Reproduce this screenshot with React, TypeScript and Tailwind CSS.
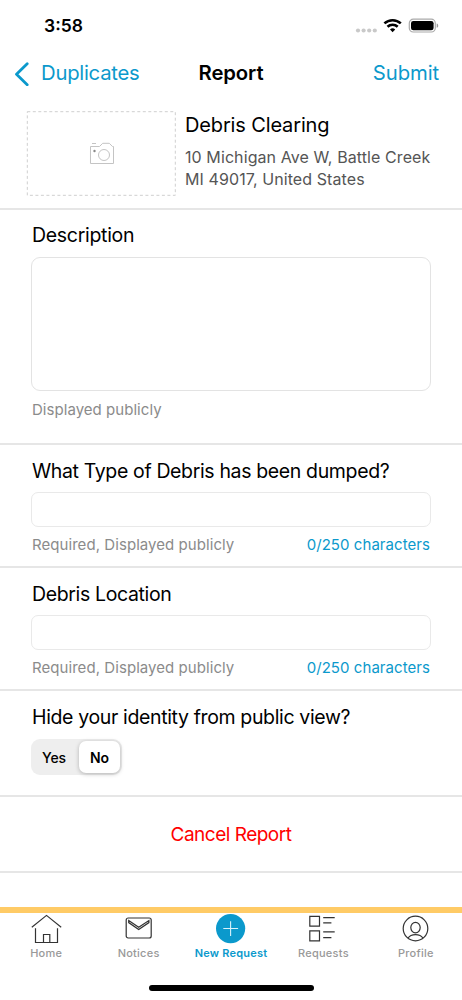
import { useState } from "react";
import type { ReactNode } from "react";

const tabs = [
  { label: "Home", icon: <HomeIcon /> },
  { label: "Notices", icon: <NoticesIcon /> },
  { label: "New Request", icon: <NewRequestIcon /> },
  { label: "Requests", icon: <RequestsIcon /> },
  { label: "Profile", icon: <ProfileIcon /> },
];

function HomeIcon() {
  return (
    <svg width="32" height="32" viewBox="0 0 32 32" fill="none" stroke="#333" strokeWidth="1.2">
      <path d="M1.8 15.2 16.5 3.4l14.7 11.8M5.5 16.3v14.2h22V16.3M13.5 30.5v-8h6.3v8" />
    </svg>
  );
}

function NoticesIcon() {
  return (
    <svg width="32" height="32" viewBox="0 0 32 32" fill="none" stroke="#333" strokeWidth="1.2">
      <rect x="3.2" y="6" width="25" height="20" rx="2" />
      <path d="M5.7 8.6 15.7 15.2l10.2-6.6v2l-10.2 6.9-10-6.9z" />
    </svg>
  );
}

function NewRequestIcon() {
  return (
    <svg width="32" height="32" viewBox="0 0 32 32">
      <circle cx="15.6" cy="16.6" r="14.6" fill="#0b99cc" />
      <path d="M8.3 16.5h14.8M15.6 9.2v14.8" stroke="#d8f2fb" strokeWidth="1.1" />
    </svg>
  );
}

function RequestsIcon() {
  return (
    <svg width="32" height="32" viewBox="0 0 32 32" fill="none" stroke="#333" strokeWidth="1.2">
      <path d="M2.8 4.3h9.7v9.8H2.8zM2.8 18.9h9.7v9.9H2.8zM16.2 5.6h11.5M16.2 10.9h8.2M16.2 19.9h11.5M16.2 25.6h8.2" />
    </svg>
  );
}

function ProfileIcon() {
  return (
    <svg width="32" height="32" viewBox="0 0 32 32" fill="none" stroke="#333" strokeWidth="1.2">
      <circle cx="15.5" cy="16.5" r="12.3" />
      <ellipse cx="15.5" cy="15.6" rx="4.7" ry="5.3" />
      <path d="M8 26.2c1.5-2.4 4.2-3.6 7.5-3.6s6 1.2 7.5 3.6" />
    </svg>
  );
}

function StatusIcons() {
  return (
    <svg width="84" height="16" viewBox="0 0 84 16">
      <g fill="#c9c9c9">
        <circle cx="3" cy="12.5" r="2.1" />
        <circle cx="8.6" cy="12.5" r="2.1" />
        <circle cx="14.2" cy="12.5" r="2.1" />
        <circle cx="19.8" cy="12.5" r="2.1" />
      </g>
      <g fill="none" stroke="#000" strokeWidth="2.6">
        <path d="M29.4 5.4a12.2 12.2 0 0 1 16.4 0" />
        <path d="M32.5 8.7a7.5 7.5 0 0 1 10.2 0" />
      </g>
      <path d="M37.6 14.2 35 11.5a3.8 3.8 0 0 1 5.2 0z" />
      <rect x="54.3" y="1.2" width="26" height="12.8" rx="4" fill="none" stroke="#aaa" strokeWidth="1.2" />
      <rect x="56" y="2.9" width="22.6" height="9.4" rx="2.4" />
      <path d="M81.7 5.4c2 .6 2 3.8 0 4.4z" fill="#999" />
    </svg>
  );
}

function Section({ className = "", children }: { className?: string; children: ReactNode }) {
  return <section className={`shrink-0 border-b-2 border-[#e6e6e6] px-[31px] ${className}`}>{children}</section>;
}

function TextField({ title }: { title: string }) {
  return (
    <Section className="h-[123px] pt-3">
      <label>
        <span className="block pl-px text-[19.5px] leading-[28px] tracking-[-0.36px] whitespace-nowrap">{title}</span>
        <input className="mt-[7px] block h-[35px] w-full rounded-[7px] border border-[#e9e9e9] bg-white px-3 outline-none" />
      </label>
      <div className="mt-2 flex justify-between px-px text-[15px] leading-[20px]">
        <span className="tracking-[0.06px] text-[#8b8b8b]">Required, Displayed publicly</span>
        <span className="tracking-[0.06px] text-[#0b99cc]">0/250 characters</span>
      </div>
    </Section>
  );
}

export default function App() {
  const [hidden, setHidden] = useState(false);

  return (
    <div className="flex h-[1000px] w-[462px] flex-col overflow-hidden bg-white font-['Inter',sans-serif] text-black">
      <div className="flex h-[50px] shrink-0 items-center justify-between pt-[2px] pr-[23px] pl-[44px]">
        <span className="text-[17.5px] font-semibold">3:58</span>
        <StatusIcons />
      </div>

      <header className="grid h-[50px] shrink-0 grid-cols-3 items-center pr-[23px] pb-[3px] pl-[14px] text-[20.3px]">
        <button className="flex items-center gap-[12px] text-[#0b99cc]" type="button">
          <svg width="15" height="24" viewBox="0 0 15 24" fill="none" stroke="currentColor" strokeWidth="2.8" strokeLinecap="round" strokeLinejoin="round">
            <path d="M13.2 1.7 2.5 12.3l10.7 10.4" />
          </svg>
          <span className="tracking-[-0.25px]">Duplicates</span>
        </button>
        <h1 className="pl-[9px] text-center font-semibold tracking-[-0.1px]">Report</h1>
        <button className="text-right tracking-[-0.1px] text-[#0b99cc]" type="button">Submit</button>
      </header>

      <section className="flex h-[110px] shrink-0 items-start border-b-2 border-[#e6e6e6] pt-[11px] pl-[26px]">
        <button type="button" aria-label="Add photo">
          <svg width="150" height="85" viewBox="0 0 150 85" fill="none">
            <rect x="1.3" y="0.7" width="148" height="83.6" stroke="#cfcfcf" strokeDasharray="3 2.5" />
            <path d="M64.5 35.5h9l3.2-3.2h6.6l3.2 3.2h1v17h-23zM66 32.5h4" stroke="#c4c4c4" />
            <circle cx="78" cy="44" r="5.5" stroke="#c4c4c4" />
            <circle cx="68.5" cy="40" r="1.2" fill="#888" />
          </svg>
        </button>
        <div className="pl-[9px]">
          <h2 className="text-[20px] leading-[28px] tracking-[-0.14px]">Debris Clearing</h2>
          <p className="mt-[7px] text-[16px] leading-[22px] tracking-[0.09px] whitespace-nowrap text-[#555]">
            10 Michigan Ave W, Battle Creek
            <br />
            MI 49017, United States
          </p>
        </div>
      </section>

      <Section className="h-[235px] pt-[11px]">
        <label>
          <span className="block pl-px text-[19.5px] leading-[28px] tracking-[-0.3px]">Description</span>
          <textarea className="mt-2 block h-[134px] w-full resize-none rounded-[9px] border border-[#e3e3e3] p-3 outline-none" />
        </label>
        <p className="mt-[9px] pl-px text-[15px] leading-[20px] tracking-[0.04px] text-[#8b8b8b]">Displayed publicly</p>
      </Section>

      <TextField title="What Type of Debris has been dumped?" />
      <TextField title="Debris Location" />

      <Section className="h-[106px] pt-3">
        <h3 className="pl-px text-[19.5px] leading-[28px] tracking-[-0.36px]">Hide your identity from public view?</h3>
        <div className="mt-2 flex h-[36px] w-[91px] rounded-[9px] bg-[#eee] p-[2px] text-[14px]">
          {["Yes", "No"].map((option) => {
            const selected = hidden === (option === "Yes");
            return (
              <button
                className={selected ? "w-[41px] rounded-[7px] bg-white font-semibold shadow-[0_1px_4px_rgba(0,0,0,0.25)]" : "flex-1 pr-1 font-medium tracking-[-0.1px]"}
                key={option}
                onClick={() => setHidden(option === "Yes")}
                type="button"
              >
                {option}
              </button>
            );
          })}
        </div>
      </Section>

      <Section className="flex h-[76px] items-center justify-center pt-[3px]">
        <button className="text-[19px] tracking-[-0.5px] text-[#f00]" type="button">Cancel Report</button>
      </Section>

      <nav className="mt-auto flex h-[93px] shrink-0 flex-col border-t-[6px] border-[#ffcb66] bg-white">
        <div className="flex">
          {tabs.map(({ label, icon }) => (
            <button className="flex flex-1 flex-col items-center" key={label} type="button">
              <span className="-mt-px">{icon}</span>
              <span className={label === "New Request" ? "mt-px text-[11px] leading-[16px] font-semibold tracking-[0.2px] whitespace-nowrap text-[#0b99cc]" : "mt-px text-[11px] leading-[16px] font-medium tracking-[0.25px] text-[#999]"}>
                {label}
              </span>
            </button>
          ))}
        </div>
        <div className="mx-auto mt-auto mb-[9px] h-[6px] w-[165px] rounded-full bg-black" />
      </nav>
    </div>
  );
}
